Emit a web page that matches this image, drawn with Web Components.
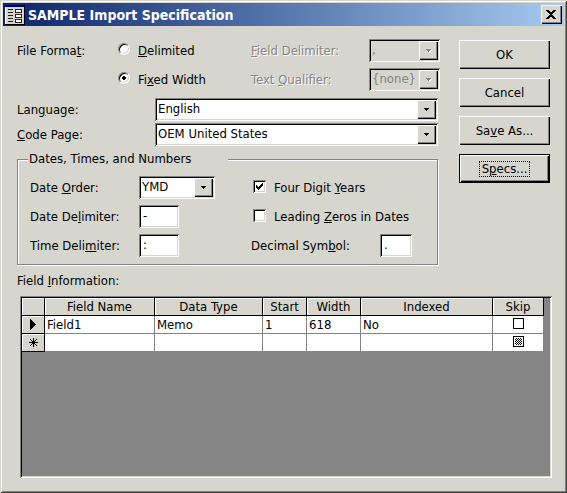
<!DOCTYPE html>
<html lang="en">
<head>
<meta charset="utf-8">
<title>SAMPLE Import Specification</title>
<style>
  body {
    margin: 0;
    --face: #d6d6ce; --shade: #848484;
    --sunken: inset 1px 1px #848484, inset -1px -1px #fff, inset 2px 2px #000, inset -2px -2px #d6d6ce;
    --raised: inset 1px 1px #fff, inset -1px -1px #000, inset -2px -2px #848484;
    font: 13px/16px "DejaVu Sans Condensed", "DejaVu Sans", sans-serif;
    color: #000;
  }
</style>
</head>
<body>
<spec-dialog>
  <span slot="title">SAMPLE Import Specification</span>
  <format-options slot="form"></format-options>
  <combo-field slot="form" class="wide" value="English">Lan<u>g</u>uage:</combo-field>
  <combo-field slot="form" class="wide second" value="OEM United States"><u>C</u>ode Page:</combo-field>
  <date-group slot="form"></date-group>
  <push-button slot="actions">OK</push-button>
  <push-button slot="actions">Cancel</push-button>
  <push-button slot="actions">Sa<u>v</u>e As...</push-button>
  <push-button slot="actions" default>S<u>p</u>ecs...</push-button>
  <field-grid slot="grid">Field <u>I</u>nformation:</field-grid>
</spec-dialog>

<script>
class Base extends HTMLElement {
  constructor() {
    super();
    this.attachShadow({ mode: 'open' }).innerHTML =
      '<style>*{box-sizing:border-box}input,select,button{font:inherit;color:inherit;border-radius:0;outline:0}' +
      this.constructor.css + '</style>' + this.html();
  }
  html() { return ''; }
}

customElements.define('spec-dialog', class extends Base {
  static css = `
    :host { display:flex; flex-direction:column; box-sizing:border-box; min-height:100vh; background:var(--face); padding:3px;
      box-shadow: inset 1px 1px var(--face), inset -1px -1px #424142, inset 2px 2px #fff, inset -2px -2px var(--shade); }
    header { display:flex; align-items:center; height:23px; padding:0 2px; color:#fff;
      background:linear-gradient(90deg,#0a246a,#a6caf0); }
    header svg { flex:none; }
    h1 { flex:1; margin:0 0 0 3px; font:bold 14px/20px "DejaVu Sans Condensed","DejaVu Sans",sans-serif; white-space:nowrap; }
    .close { flex:none; width:21px; height:19px; padding:0 1px 1px 0; border:0; background:var(--face); box-shadow:var(--raised); display:grid; place-items:center; }
    main { flex:1; display:flex; flex-direction:column; padding:13px 12px 12px 14px; }
    .top { display:grid; grid-template-columns:1fr 91px; column-gap:21px; padding-right:2px; }
    .actions { display:flex; flex-direction:column; gap:9px; padding-top:1px; }
    ::slotted(field-grid) { flex:1; }
    ::slotted(.wide) { --label:138px; margin-top:7px; }
    ::slotted(.second) { margin-top:2px; }
  `;
  html() { return `
    <header>
      <svg width="20" height="20" viewBox="0 0 20 20" shape-rendering="crispEdges" aria-hidden="true">
        <path fill="#000" d="M0 0h20v20H0z"/><path fill="#d6d6ce" d="M0 2h19v17H0z"/>
        <path fill="#fff" d="M0 2h1v17H0z"/><path fill="#000084" d="M0 0h19v2H0z"/>
        <path fill="#222" d="M3 4h5v1H3zM3 7h5v1H3zM3 10h5v1H3zM3 13h5v1H3zM3 16h5v1H3z"/>
        <path fill="#222" d="M10 4h7v4h-7zM10 9h7v4h-7zM10 14h7v4h-7z"/>
        <path fill="#fff" d="M11 5h5v2h-5zM11 10h5v2h-5zM11 15h5v2h-5z"/>
      </svg>
      <h1><slot name="title"></slot></h1>
      <button class="close" aria-label="Close"><svg width="10" height="9" viewBox="0 0 10 9" shape-rendering="crispEdges"><path d="M0 0h3v1h1v1h2V1h1V0h3v1H9v1H8v1H7v1H6v1h1v1h1v1h1v1h1v1H7V8H6V7H4v1H3v1H0V8h1V7h1V6h1V5h1V4H3V3H2V2H1V1H0z"/></svg></button>
    </header>
    <main>
      <div class="top"><div><slot name="form"></slot></div><div class="actions"><slot name="actions"></slot></div></div>
      <slot name="grid"></slot>
    </main>`; }
});

customElements.define('push-button', class extends Base {
  static css = `
    :host { display:block; }
    button { width:100%; height:29px; padding:0; border:0; background:var(--face); box-shadow:var(--raised); }
    span { display:inline-block; padding:0 2px; }
    :host([default]) button { box-shadow:inset 0 0 0 1px #000, inset 2px 2px #fff, inset -2px -2px #000, inset -3px -3px var(--shade); }
    :host([default]) span { outline:1px dotted #000; line-height:14px; }
  `;
  html() { return `<button><span><slot></slot></span></button>`; }
});

customElements.define('combo-field', class extends Base {
  static css = `
    :host { display:grid; grid-template-columns:var(--label) 1fr; align-items:center; }
    .box { position:relative; height:23px; }
    select { appearance:none; width:100%; height:100%; margin:0; padding:0 20px 1px 3px; border:0; background:#fff; box-shadow:var(--sunken); opacity:1; }
    .arrow { position:absolute; right:2px; top:2px; width:19px; bottom:2px; background:var(--face); box-shadow:var(--raised); pointer-events:none; display:grid; place-items:center; }
    :host([disabled]) label { color:var(--shade); text-shadow:1px 1px #fff; }
    :host([disabled]) select { background:var(--face); color:var(--shade); }
    :host([disabled]) svg { fill:var(--shade); filter:drop-shadow(1px 1px #fff); }
  `;
  html() {
    const v = this.getAttribute('value');
    return `<label for="c"><slot></slot></label><div class="box">
      <select id="c" ${this.hasAttribute('disabled') ? 'disabled' : ''}><option>${v}</option></select>
      <span class="arrow"><svg width="5" height="3" viewBox="0 0 5 3" shape-rendering="crispEdges"><path d="M0 0h5v1H4v1H3v1H2V2H1V1H0z"/></svg></span></div>`;
  }
});

customElements.define('text-field', class extends Base {
  static css = `
    :host { display:grid; grid-template-columns:var(--label) var(--box); align-items:center; }
    input { width:100%; height:23px; margin:0; padding:0 3px 3px 4px; border:0; background:#fff; box-shadow:var(--sunken); }
  `;
  html() { return `<label for="t"><slot></slot></label><input id="t" type="text" value="${this.getAttribute('value')}">`; }
});

customElements.define('check-field', class extends Base {
  static css = `
    :host { display:flex; align-items:center; gap:8px; }
    input { appearance:none; flex:none; width:13px; height:13px; margin:0 0 3px 2px; background:#fff; box-shadow:var(--sunken); }
    input:checked { background:#fff url('data:image/svg+xml,<svg xmlns="http://www.w3.org/2000/svg" width="13" height="13" shape-rendering="crispEdges"><path d="M3 5h1v1h1v1h1V6h1V5h1V4h1V3h1v3H9v1H8v1H7v1H6v1H5V9H4V8H3z"/></svg>'); }
  `;
  html() { return `<input id="k" type="checkbox" ${this.hasAttribute('checked') ? 'checked' : ''}><label for="k"><slot></slot></label>`; }
});

customElements.define('format-options', class extends Base {
  static css = `
    :host { display:grid; grid-template-columns:101px 133px 1fr; margin-right:-2px; }
    .col { display:grid; grid-auto-rows:23px; row-gap:6px; align-items:center; }
    .radio { display:flex; align-items:center; gap:8px; white-space:nowrap; }
    input { appearance:none; flex:none; width:12px; height:12px; margin:0 0 3px; border-radius:50%; border:1px solid; border-color:#848484 #fff #fff #848484;
      background:#fff; box-shadow:inset 1px 1px #000, inset -1px -1px #d6d6ce; }
    input:checked { background:radial-gradient(circle,#000 0 2px,#fff 2px); }
    combo-field { --label:118px; }
  `;
  html() { return `
    <div class="col"><span id="ff">File Forma<u>t</u>:</span></div>
    <div class="col" role="radiogroup" aria-labelledby="ff">
      <span class="radio"><input type="radio" name="f" id="d"><label for="d"><u>D</u>elimited</label></span>
      <span class="radio"><input type="radio" name="f" id="w" checked><label for="w">Fi<u>x</u>ed Width</label></span>
    </div>
    <div class="col">
      <combo-field disabled value=","><u>F</u>ield Delimiter:</combo-field>
      <combo-field disabled value="{none}">Text <u>Q</u>ualifier:</combo-field>
    </div>`; }
});

customElements.define('date-group', class extends Base {
  static css = `
    :host { display:block; margin-top:5px; }
    fieldset { margin:0; padding:9px 0 7px 12px; border:1px solid var(--shade); box-shadow:1px 1px #fff, inset 1px 1px #fff; min-width:0;
      display:grid; grid-template-columns:221px 1fr; grid-auto-rows:23px; row-gap:6px; align-items:center; }
    legend { margin-left:-2px; width:200px; padding:0 0 0 1px; background:var(--face); }
    .l { --label:109px; --box:40px; } .r { --label:129px; --box:32px; }
    combo-field { width:185px; }
  `;
  html() { return `<fieldset><legend>Dates, Times, and Numbers</legend>
    <combo-field class="l" value="YMD">Date <u>O</u>rder:</combo-field>
    <check-field checked>Four Digit <u>Y</u>ears</check-field>
    <text-field class="l" value="-">Date De<u>l</u>imiter:</text-field>
    <check-field>Leading <u>Z</u>eros in Dates</check-field>
    <text-field class="l" value=":">Time Deli<u>m</u>iter:</text-field>
    <text-field class="r" value=".">Decimal Sym<u>b</u>ol:</text-field>
  </fieldset>`; }
});

customElements.define('field-grid', class extends Base {
  static css = `
    :host { display:flex; flex-direction:column; margin-top:8px; }
    .sheet { flex:1; margin:7px 0 0 3px; padding:2px 8px 2px 2px; background:var(--shade); box-shadow:var(--sunken); min-height:100px; }
    table { width:100%; table-layout:fixed; border-collapse:separate; border-spacing:0; }
    th, td { height:18px; padding:0; line-height:16px; font-weight:normal; white-space:nowrap; overflow:hidden; }
    thead th, tbody th { background:var(--face); border:solid #000; border-width:0 1px 1px 0; box-shadow:inset 1px 1px #fff; text-align:center; }
    td { background:#fff; border:solid var(--shade); border-width:0 1px 1px 0; padding:1px 0 0 2px; }
    td:last-child { text-align:center; padding:0; }
    th svg { display:block; margin:auto; }
    input { appearance:none; display:block; width:11px; height:11px; margin:0 auto 3px; border:1px solid #000; background:#fff; }
    input:indeterminate { background:repeating-conic-gradient(#000 0 25%,#fff 0 50%) 0 0/2px 2px; border:1px solid #000; box-shadow:inset 0 0 0 1px #fff; }
  `;
  html() { return `<span id="cap"><slot></slot></span><div class="sheet"><table aria-labelledby="cap">
    <colgroup><col style="width:23px"><col style="width:110px"><col style="width:108px"><col style="width:44px"><col style="width:54px"><col><col style="width:51px"></colgroup>
    <thead><tr><th></th><th>Field Name</th><th>Data Type</th><th>Start</th><th>Width</th><th>Indexed</th><th>Skip</th></tr></thead>
    <tbody>
      <tr><th><svg width="6" height="11" viewBox="0 0 6 11" shape-rendering="crispEdges"><path d="M0 0h1v1h1v1h1v1h1v1h1v1h1v1H5v1H4v1H3v1H2v1H1v1H0z"/></svg></th><td>Field1</td><td>Memo</td><td>1</td><td>618</td><td>No</td><td><input type="checkbox" aria-label="Skip Field1"></td></tr>
      <tr><th><svg width="9" height="9" viewBox="0 0 9 9" shape-rendering="crispEdges"><path d="M4 0h1v9H4zM0 4h9v1H0zM1 1h1v1H1zM2 2h1v1H2zM3 3h1v1H3zM5 5h1v1H5zM6 6h1v1H6zM7 7h1v1H7zM7 1h1v1H7zM6 2h1v1H6zM5 3h1v1H5zM3 5h1v1H3zM2 6h1v1H2zM1 7h1v1H1z"/></svg></th><td></td><td></td><td></td><td></td><td></td><td><input type="checkbox" class="mixed" aria-label="Skip new field"></td></tr>
    </tbody></table></div>`; }
  connectedCallback() { this.shadowRoot.querySelector('.mixed').indeterminate = true; }
});
</script>
</body>
</html>
